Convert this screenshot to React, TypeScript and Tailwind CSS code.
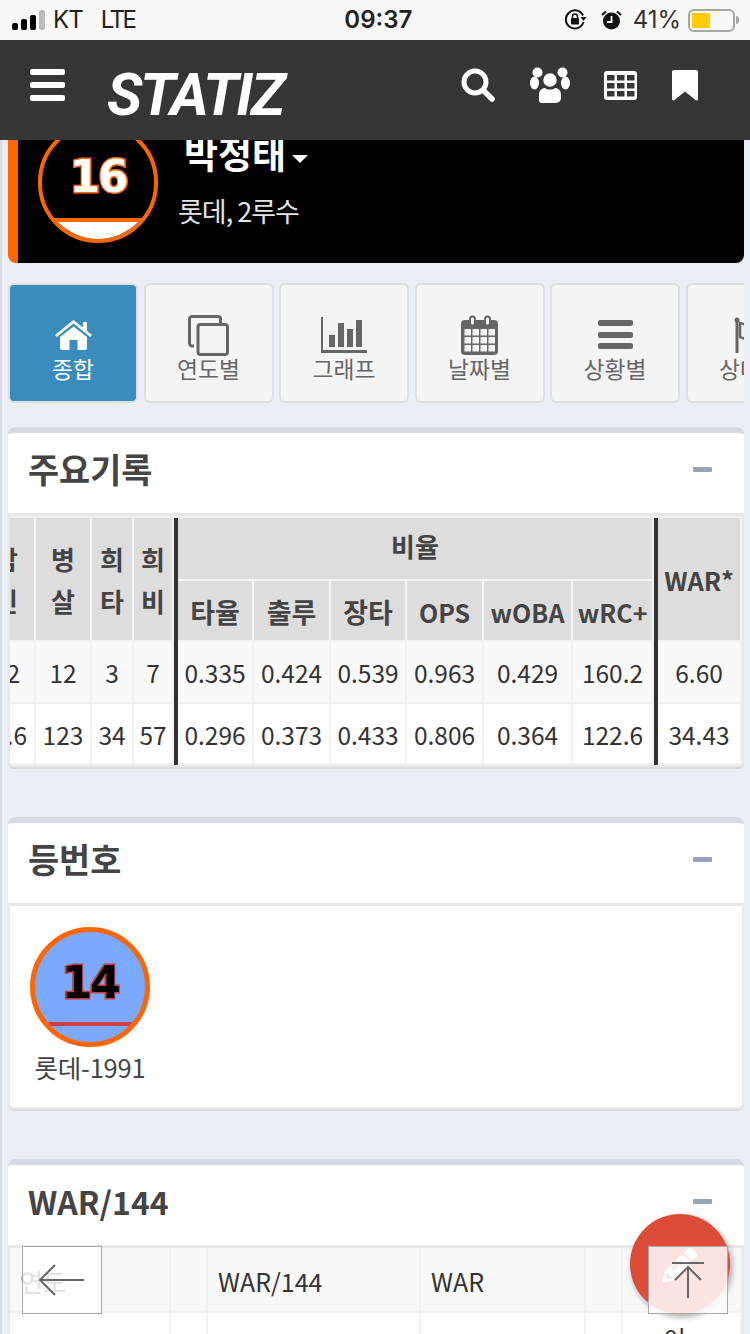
import type { ReactNode } from "react";
import { FaPencilAlt } from "react-icons/fa";

const tabs: { label: string; icon: ReactNode; active?: boolean }[] = [
  { label: "종합", icon: <HomeIcon />, active: true },
  { label: "연도별", icon: <CloneIcon /> },
  { label: "그래프", icon: <ChartIcon /> },
  { label: "날짜별", icon: <CalendarIcon /> },
  { label: "상황별", icon: <BarsIcon /> },
  { label: "상대별", icon: <FlagIcon /> },
];

const subHeaders = [
  { label: "타율", size: "text-[27px]" },
  { label: "출루", size: "text-[27px]" },
  { label: "장타", size: "text-[27px]" },
  { label: "OPS", size: "text-[25px]" },
  { label: "wOBA", size: "text-[25px]" },
  { label: "wRC+", size: "text-[25px]" },
];

const rows = [
  { first: "2", pad: "pr-[14px]", cells: ["12", "3", "7"], rates: ["0.335", "0.424", "0.539", "0.963", "0.429", "160.2"], war: "6.60", bg: "bg-[#f9f9f9]", h: "h-[62px]" },
  { first: ".6", pad: "pr-[7px]", cells: ["123", "34", "57"], rates: ["0.296", "0.373", "0.433", "0.806", "0.364", "122.6"], war: "34.43", bg: "bg-white", h: "h-[61px]" },
];

function HomeIcon() {
  return (
    <svg width="37" height="30" viewBox="0 0 37 30" fill="#fff">
      <path d="M18.5 0 L28 7.5 V2 H32 V11 L37 15 L35.3 17 L18.5 3.6 L1.7 17 L0 15 Z" />
      <path d="M18.5 6.5 L32 17 V28 a2 2 0 0 1-2 2 H22.5 V20 H14.5 V30 H7 a2 2 0 0 1-2-2 V17 Z" />
    </svg>
  );
}

function CloneIcon() {
  return (
    <svg width="41" height="41" viewBox="0 0 41 41" fill="none" stroke="#666" strokeWidth="3">
      <path d="M6 31 H4 a2.5 2.5 0 0 1-2.5-2.5 V4 A2.5 2.5 0 0 1 4 1.500 H30 a2.500 2.500 0 0 1 2.500 2.500 V9" />
      <rect x="10" y="9.500" width="29.500" height="30" rx="2.500" />
    </svg>
  );
}

function ChartIcon() {
  return (
    <svg width="46" height="36" viewBox="0 0 46 36" fill="#666">
      <path d="M0 0 H2 V33 H46 V36 H0 Z" />
      <rect x="8" y="18" width="6" height="12" />
      <rect x="17" y="6" width="6" height="24" />
      <rect x="26" y="12" width="6" height="18" />
      <rect x="35" y="3" width="6" height="27" />
    </svg>
  );
}

function CalendarIcon() {
  return (
    <svg width="37" height="40" viewBox="0 0 37 40">
      <rect x="0" y="5" width="37" height="35" rx="4" fill="#666" />
      <rect x="9" y="1.500" width="5" height="9" rx="2.500" fill="#f4f4f4" stroke="#666" strokeWidth="2" />
      <rect x="24" y="1.500" width="5" height="9" rx="2.500" fill="#f4f4f4" stroke="#666" strokeWidth="2" />
      <g fill="#f4f4f4">
        {[14, 22, 30].map((y) =>
          [3.500, 11.500, 19.500, 27.500].map((x) => (
            <rect key={`${x}-${y}`} x={x} y={y} width="6.500" height="6.500" />
          ))
        )}
      </g>
    </svg>
  );
}

function BarsIcon() {
  return (
    <svg width="35" height="30" viewBox="0 0 35 30" fill="#666">
      <rect y="0" width="35" height="6" rx="2" />
      <rect y="12" width="35" height="6" rx="2" />
      <rect y="23" width="35" height="6" rx="2" />
    </svg>
  );
}

function FlagIcon() {
  return (
    <svg width="34" height="36" viewBox="0 0 34 36" fill="#666">
      <circle cx="3" cy="3" r="2.500" />
      <rect x="1.500" y="3" width="3" height="33" />
      <path d="M6 6 L16 9 V24 L6 20 Z" fill="none" stroke="#666" strokeWidth="2.500" />
    </svg>
  );
}

function StatusBar() {
  return (
    <div className="h-10 bg-[#f8f8f8] flex items-center pl-3 pr-[11px] text-[24px] text-[#222] font-['Inter',sans-serif]">
      <div className="flex items-end gap-[3px] h-[20px]">
        <span className="w-[6px] h-[7px] rounded-[2px] bg-black" />
        <span className="w-[6px] h-[11px] rounded-[2px] bg-black" />
        <span className="w-[6px] h-[15px] rounded-[2px] bg-black" />
        <span className="w-[6px] h-[20px] rounded-[2px] bg-[#bbb]" />
      </div>
      <span className="ml-2 tracking-[-1px]">KT</span>
      <span className="ml-[18px] tracking-[-2.500px]">LTE</span>
      <span className="ml-[210px] font-semibold">09:37</span>
      <svg className="ml-auto" width="24" height="22" viewBox="0 0 24 22" fill="none" stroke="#111" strokeWidth="2">
        <path d="M19.500 13 A9 9 0 1 1 19 6.500" />
        <path d="M16.500 8 L22.500 8 L19.500 12 Z" fill="#111" stroke="none" />
        <rect x="7" y="9" width="8" height="6.500" rx="1" fill="#111" stroke="none" />
        <path d="M8.500 9 V7.500 a2.500 2.500 0 0 1 5 0 V9" strokeWidth="1.500" />
      </svg>
      <svg className="ml-[13px]" width="21" height="20" viewBox="0 0 21 20">
        <circle cx="10.500" cy="11" r="8.500" fill="#111" />
        <path d="M10.500 6 V12 H6" fill="none" stroke="#f8f8f8" strokeWidth="1.800" />
        <path d="M1 5 L5 1.500 M20 5 L16 1.500" stroke="#111" strokeWidth="2.200" />
      </svg>
      <span className="ml-[11px] text-[#333]">41%</span>
      <div className="ml-[7px] w-[47px] h-[23px] rounded-[6px] border-2 border-[#a5a5a5] p-[2px]">
        <div className="w-[18px] h-full bg-[#ffcc00]" />
      </div>
      <span className="ml-[1px] w-[3px] h-[8px] rounded-r-full bg-[#a5a5a5]" />
    </div>
  );
}

function NavBar() {
  return (
    <div className="h-[100px] bg-[#363636] flex items-center text-white">
      <div className="ml-[30px] w-[35px] flex flex-col gap-[7px] -mt-[10px]">
        <span className="h-[6px] rounded-[2px] bg-white" />
        <span className="h-[6px] rounded-[2px] bg-white" />
        <span className="h-[6px] rounded-[2px] bg-white" />
      </div>
      <span className="ml-[42px] mt-[9px] font-['Roboto',sans-serif] italic font-bold text-[59px] leading-none tracking-[-2.200px]">
        STATIZ
      </span>
      <div className="ml-auto mr-[52px] -mt-[10px] flex items-center">
        <svg width="34" height="34" viewBox="0 0 34 34" fill="none" stroke="#fff">
          <circle cx="14" cy="14" r="11" strokeWidth="5" />
          <path d="M22.500 22.500 L31 31" strokeWidth="5.500" strokeLinecap="round" />
        </svg>
        <svg className="ml-[35px]" width="40" height="36" viewBox="0 0 40 36" fill="#fff">
          <circle cx="7.500" cy="5.500" r="5" />
          <circle cx="32.500" cy="5.500" r="5" />
          <ellipse cx="4.500" cy="16" rx="4.500" ry="6.500" />
          <ellipse cx="35.500" cy="16" rx="4.500" ry="6.500" />
          <circle cx="20" cy="13" r="7.500" stroke="#363636" strokeWidth="1.500" />
          <path d="M9 34 V28 C9 23 12 21 15 21 C17 23 23 23 25 21 C28 21 31 23 31 28 V31 a5 5 0 0 1-5 5 H12 a3 3 0 0 1-3-2 Z" />
        </svg>
        <svg className="ml-[34px]" width="33" height="29" viewBox="0 0 33 29">
          <rect width="33" height="29" rx="3" fill="#fff" />
          <g fill="#363636">
            {[4, 12, 20].map((y) =>
              [3, 13, 23].map((x) => <rect key={`${x}-${y}`} x={x} y={y} width="7.500" height="5.500" />)
            )}
          </g>
        </svg>
        <svg className="ml-[35px]" width="26" height="31" viewBox="0 0 26 31" fill="#fff">
          <path d="M2 0 H24 a2 2 0 0 1 2 2 V29 a1.500 1.500 0 0 1-2.500 1 L13 21.500 L2.500 30 A1.500 1.500 0 0 1 0 29 V2 a2 2 0 0 1 2-2 Z" />
        </svg>
      </div>
    </div>
  );
}

function PlayerCard() {
  return (
    <div className="ml-[6px] w-[736px] h-[123px] bg-black border-l-[10px] border-l-[#ff6600] rounded-b-lg flex items-start">
      <div className="ml-[20px] -mt-[18px] w-[120px] h-[121px] shrink-0 rounded-full border-4 border-[#ff6600] overflow-hidden flex flex-col">
        <div className="flex-1 flex items-center justify-center pt-[10px]">
          <span className="font-['DejaVu_Sans',sans-serif] font-bold text-[44px] leading-none text-white [-webkit-text-stroke:3px_#ff6600] [paint-order:stroke_fill] tracking-[-2px]">
            16
          </span>
        </div>
        <div className="h-[21px] border-t-4 border-t-[#ff6600] bg-white" />
      </div>
      <div className="ml-[20px] -mt-[9px] text-white">
        <div className="pl-[6px] flex items-center text-[37px] font-bold leading-[44px]">
          박정태
          <span className="ml-1.5 mt-3 border-x-8 border-t-8 border-x-transparent border-t-white" />
        </div>
        <div className="mt-[18px] text-[27px] leading-[36px] text-[#e4e4e4] tracking-[-1px]">롯데, 2루수</div>
      </div>
    </div>
  );
}

function TabRow() {
  return (
    <div className="ml-[6px] mt-5 w-[736px] flex gap-[5.500px] overflow-hidden">
      {tabs.map((t) => (
        <div
          key={t.label}
          className={`w-[130px] h-[120px] shrink-0 rounded-md border-2 border-[#dfdfdf] flex flex-col items-center ${
            t.active ? "bg-[#3a8cbc] text-white" : "bg-[#f4f4f4] text-[#666]"
          }`}
        >
          <div className="h-[44px] mt-[28px] flex items-center justify-center">{t.icon}</div>
          <div className="text-[22.800px] leading-[30px] -mt-[3px]">{t.label}</div>
        </div>
      ))}
    </div>
  );
}

function Card({ title, titleSize, children }: { title: string; titleSize: string; children: ReactNode }) {
  return (
    <section className="ml-[6px] w-[736px] bg-white rounded-t-lg rounded-b-md border-t-[6px] border-t-[#d5dae3] shadow-[0_2px_0_#dcdcdc] mb-[50px]">
      <div className="h-[80px] flex items-center justify-between pl-5 pr-[32px]">
        <h2 className={`${titleSize} font-bold text-[#444] leading-none -mt-[8px]`}>{title}</h2>
        <span className="w-[19px] h-[5px] -mt-[7px] rounded-[1px] bg-[#98a2b8]" />
      </div>
      <div className="border-2 border-t-[3px] border-[#e8e8e8] border-t-[#e8e8e8] rounded-b-md overflow-hidden">{children}</div>
    </section>
  );
}

function StatsTable() {
  const line = "shadow-[inset_0_-2px_0_#f2f2f2]";
  const th = "border-r-2 border-[#f4f4f4] bg-[#dddddd] font-bold text-[#444] text-center p-0 shadow-[inset_0_-2px_0_#f4f4f4]";
  const td = `border-r-2 border-[#f2f2f2] text-center text-[#333] p-0 ${line}`;
  const thick = "border-l-4 border-l-[#333]";
  return (
    <div className="overflow-hidden border-t-2 border-t-[#f0f0f0]">
      <table className="ml-[-32px] w-[764px] table-fixed border-separate border-spacing-0 text-[24.500px] leading-[42px]">
        <colgroup>
          {[58, 56, 42, 40, 80, 77, 76, 77, 89, 81, 88].map((w, i) => (
            <col key={i} style={{ width: w }} />
          ))}
        </colgroup>
        <thead>
          <tr className="h-[63px]">
            <th rowSpan={2} className={`${th} text-[26px] text-right pr-[16px]`}>
              삼<br />진
            </th>
            <th rowSpan={2} className={`${th} text-[26px]`}>
              병<br />살
            </th>
            <th rowSpan={2} className={`${th} text-[26px]`}>
              희<br />타
            </th>
            <th rowSpan={2} className={`${th} text-[26px] border-r-0`}>
              희<br />비
            </th>
            <th colSpan={6} className={`${th} text-[26px] ${thick} border-r-0 pb-[7px]`}>
              비율
            </th>
            <th rowSpan={2} className={`${th} text-[25.500px] ${thick} border-r-0`}>
              WAR*
            </th>
          </tr>
          <tr className="h-[61px]">
            {subHeaders.map((h, i) => (
              <th key={h.label} className={`${th} ${h.size} ${i === 0 ? thick : ""} ${i === 5 ? "border-r-0" : ""}`}>
                {h.label}
              </th>
            ))}
          </tr>
        </thead>
        <tbody>
          {rows.map((r) => (
            <tr key={r.war} className={`${r.h} ${r.bg}`}>
              <td className={`${td} text-right ${r.pad}`}>{r.first}</td>
              {r.cells.map((c, i) => (
                <td key={i} className={`${td} ${i === 2 ? "border-r-0" : ""}`}>
                  {c}
                </td>
              ))}
              {r.rates.map((c, i) => (
                <td key={i} className={`${td} ${i === 0 ? thick : ""} ${i === 5 ? "border-r-0" : ""}`}>
                  {c}
                </td>
              ))}
              <td className={`${td} ${thick} border-r-0`}>{r.war}</td>
            </tr>
          ))}
        </tbody>
      </table>
    </div>
  );
}

function NumberCard() {
  return (
    <div className="h-[201px] pt-[21px] pl-[20px]">
      <div className="w-[120px] h-[120px] rounded-full border-[5px] border-[#ff6600] bg-[#7aa9ff] overflow-hidden flex flex-col">
        <div className="h-[90px] flex items-center justify-center pt-[12px]">
          <span className="font-['DejaVu_Sans',sans-serif] font-bold text-[44px] leading-none text-black [-webkit-text-stroke:3px_#c94040] [paint-order:stroke_fill] tracking-[-2px]">
            14
          </span>
        </div>
        <div className="h-1 bg-[#c94040]" />
      </div>
      <div className="mt-[2px] w-[120px] text-center text-[25.500px] leading-[36px] text-[#444] tracking-[-0.200px] whitespace-nowrap">
        롯데-1991
      </div>
    </div>
  );
}

function WarTable() {
  const td = "border-r-2 border-b-2 border-[#f2f2f2] text-left pl-[10px] text-[#333] p-0";
  return (
    <table className="w-full table-fixed border-separate border-spacing-0 text-[25px]">
      <colgroup>
        {[161, 37, 213, 165, 37, 119].map((w, i) => (
          <col key={i} style={{ width: w }} />
        ))}
      </colgroup>
      <tbody>
        <tr className="h-[65px] bg-[#f8f8f8]">
          <td className={`${td} pt-[4px]`}>연도</td>
          <td className={td} />
          <td className={`${td} pt-[4px]`}>WAR/144</td>
          <td className={`${td} pt-[4px]`}>WAR</td>
          <td className={td} />
          <td className={`${td} border-r-0`} />
        </tr>
        <tr className="h-[60px] bg-white align-top">
          <td className={td} />
          <td className={td} />
          <td className={td} />
          <td className={td} />
          <td className={td} />
          <td className={`${td} border-r-0 pl-[40px] pt-[7px]`}>이</td>
        </tr>
      </tbody>
    </table>
  );
}

export default function App() {
  return (
    <div className="relative h-[1334px] w-[750px] overflow-hidden bg-[#ebeff5] font-['Noto_Sans_CJK_KR','Noto_Sans',sans-serif]">
      <header className="relative z-10">
        <StatusBar />
        <NavBar />
      </header>
      <main className="border-l-2 border-l-[#d5dae3] h-full">
        <PlayerCard />
        <TabRow />
        <div className="mt-6">
          <Card title="주요기록" titleSize="text-[33.800px]">
            <StatsTable />
          </Card>
          <Card title="등번호" titleSize="text-[33.800px]">
            <NumberCard />
          </Card>
          <Card title="WAR/144" titleSize="text-[32px]">
            <WarTable />
          </Card>
        </div>
      </main>

      {/* floating buttons */}
      <div className="absolute left-[630px] top-[1214px] w-[100px] h-[100px] rounded-full bg-[#dd4b39] shadow-[2px_3px_6px_rgba(0,0,0,0.35)] flex items-center justify-center">
        <FaPencilAlt size={34} color="#fff" className="mt-[2px]" />
      </div>
      <button className="absolute left-[22px] top-[1246px] w-[80px] h-[68px] border border-[#aaa] bg-white/85 flex items-center justify-center">
        <svg width="48" height="34" viewBox="0 0 48 34" fill="none" stroke="#666" strokeWidth="2">
          <path d="M46 17 H2 M17 2 L2 17 L17 32" />
        </svg>
      </button>
      <button className="absolute left-[648px] top-[1246px] w-[80px] h-[68px] border border-[#aaa] bg-white/85 flex items-center justify-center">
        <svg width="34" height="36" viewBox="0 0 34 36" fill="none" stroke="#666" strokeWidth="2">
          <path d="M1 1 H33 M17 36 V5 M4 18 L17 5 L30 18" />
        </svg>
      </button>
    </div>
  );
}
